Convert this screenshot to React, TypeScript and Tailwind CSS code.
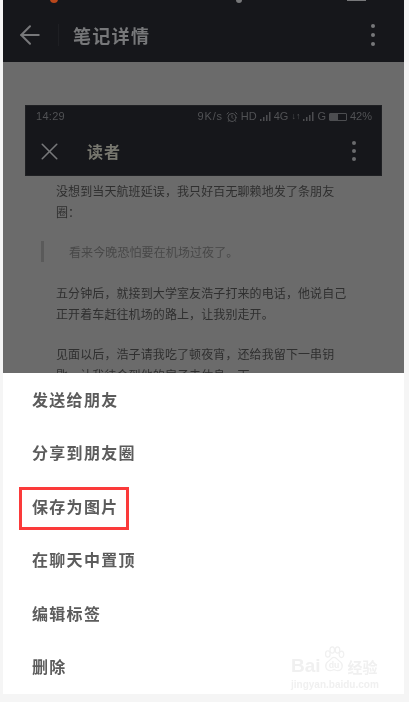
import { ArrowLeft, X, AlarmClock } from "lucide-react";

const CJK = "font-['Noto_Sans_CJK_SC','Noto_Sans',sans-serif]";

const menuItems = ["发送给朋友", "分享到朋友圈", "保存为图片", "在聊天中置顶", "编辑标签", "删除"];

function Kebab({ className }: { className: string }) {
  return (
    <div className={`flex flex-col items-center ${className}`}>
      <span className="w-[4px] h-[4px] rounded-full bg-current" />
      <span className="w-[4px] h-[4px] rounded-full bg-current" />
      <span className="w-[4px] h-[4px] rounded-full bg-current" />
    </div>
  );
}

function Signal() {
  return (
    <svg width="11" height="9" viewBox="0 0 11 9" fill="#4c4d50">
      <rect x="0" y="7" width="1.5" height="2" />
      <rect x="3" y="5" width="1.5" height="4" />
      <rect x="6" y="3" width="1.5" height="6" />
      <rect x="9" y="0" width="1.5" height="9" />
    </svg>
  );
}

function StatusRow() {
  return (
    <div className="h-[21px] flex items-center pl-[10px] pr-[9px] text-[11px] leading-none text-[#515255] font-['Liberation_Sans',sans-serif] blur-[0.4px]">
      <span className="tracking-[0.3px]">14:29</span>
      <div className="ml-auto flex items-center gap-[3px]">
        <span className="tracking-[0.8px]">9K/s</span>
        <AlarmClock className="w-[12px] h-[12px]" strokeWidth={2} />
        <span>HD</span>
        <Signal />
        <span>4G</span>
        <span className="text-[9px]">↓↑</span>
        <Signal />
        <span>G</span>
        <div className="w-[18px] h-[8px] border border-[#4c4d50] rounded-[1px]">
          <div className="w-[8px] h-full bg-[#4c4d50]" />
        </div>
        <span>42%</span>
      </div>
    </div>
  );
}

function ArticleCard() {
  return (
    <div className="mt-[43px] mx-[22px] h-[71px] bg-[#16171b] flex flex-col border border-[#1f2023]">
      <StatusRow />
      <div className="flex-1 flex items-center pl-[9px] pr-[25px] text-[#77787a]">
        <X className="w-[29px] h-[29px]" strokeWidth={1.3} />
        <span className={`${CJK} ml-[23px] text-[16px] leading-none font-bold tracking-[1px] text-[#77776f] blur-[0.3px]`}>读者</span>
        <Kebab className="ml-auto gap-[4px] text-[#6a6b6d]" />
      </div>
    </div>
  );
}

function Article() {
  return (
    <div className={`${CJK} pl-[53px] pr-[57px] text-[12px] leading-[21px] tracking-[0.1px] text-[#2f2f2f] blur-[0.4px]`}>
      <p className="mt-[4px]">没想到当天航班延误，我只好百无聊赖地发了条朋友圈：</p>
      <div className="mt-[19px] -ml-[15px] pl-[25px] border-l-[3px] border-[#5a5a5a] text-[#484848] h-[21px] whitespace-nowrap">
        看来今晚恐怕要在机场过夜了。
      </div>
      <p className="mt-[20px]">五分钟后，就接到大学室友浩子打来的电话，他说自己正开着车赶往机场的路上，让我别走开。</p>
      <p className="mt-[19px]">见面以后，浩子请我吃了顿夜宵，还给我留下一串钥匙，让我待会到他的房子去休息一下。</p>
    </div>
  );
}

function Watermark() {
  return (
    <div className="absolute right-[24px] bottom-[3px] w-[89px] text-[#f0f0f0] select-none blur-[0.4px]">
      <div className="flex items-end whitespace-nowrap">
        <span className="font-['Liberation_Sans',sans-serif] font-bold text-[19px] leading-none">Bai</span>
        <svg width="24" height="29" viewBox="0 0 24 33" fill="none" stroke="currentColor" strokeWidth="1.4" className="ml-[1px] shrink-0">
          <ellipse cx="5" cy="9" rx="2.6" ry="3.6" />
          <ellipse cx="10" cy="4.5" rx="2.6" ry="3.6" />
          <ellipse cx="16" cy="4.5" rx="2.6" ry="3.6" />
          <ellipse cx="20.5" cy="9.5" rx="2.6" ry="3.6" />
          <path d="M12 13c-3 0-4 3-7 5-4 3-3 10 3 10 2 0 3-1 4-1s2 1 4 1c6 0 7-7 3-10-3-2-4-5-7-5z" />
          <text x="12" y="25" textAnchor="middle" fontSize="10" fontWeight="700" fontFamily="Liberation Sans" fill="currentColor" stroke="none">du</text>
        </svg>
        <span className={`${CJK} font-bold text-[15px] leading-none ml-[2px] mb-[1px] shrink-0`}>经验</span>
      </div>
      <div className="mt-[4px] font-['Liberation_Sans',sans-serif] font-bold text-[10px] leading-[12px] whitespace-nowrap">jingyan.baidu.com</div>
    </div>
  );
}

export default function App() {
  return (
    <div className="w-[409px] h-[702px] bg-[#f5f5f5] pl-[3px] pr-[5px] pb-[8px] overflow-hidden">
      <div className="relative h-full bg-white flex flex-col overflow-hidden">
        <header className="relative h-[62px] pt-[7px] bg-[#16171b] flex items-center shrink-0 text-[#77787a]">
          <div className="absolute top-0 left-0 right-0 h-[3px] overflow-hidden">
            <span className="absolute left-[47px] -top-[5px] w-[8px] h-[8px] rounded-full bg-[#b9471b]" />
            <span className="absolute left-[233px] -top-[3px] w-[6px] h-[6px] rounded-full bg-[#77787a]" />
            <span className="absolute left-[344px] top-0 w-[19px] h-[1px] bg-[#77787a]" />
          </div>
          <ArrowLeft className="ml-[12px] w-[30px] h-[30px]" strokeWidth={1.6} />
          <span className="ml-[13px] w-px h-[22px] bg-[#1e1f23]" />
          <span className={`${CJK} ml-[14px] text-[18px] leading-none font-bold tracking-[1.3px] blur-[0.3px]`}>笔记详情</span>
          <Kebab className="ml-auto mr-[29px] gap-[5px]" />
        </header>

        <main className="h-[311px] bg-[#6b6b6b] overflow-hidden shrink-0">
          <ArticleCard />
          <Article />
        </main>

        <section className="flex-1 flex flex-col bg-white">
          {menuItems.map((item, i) => (
            <div key={item} className="relative flex-1 flex items-center pl-[29px] pb-[2px]">
              <span className={`${CJK} text-[16px] leading-none font-bold tracking-[1.3px] text-[#5c5c5c] blur-[0.3px]`}>{item}</span>
              {i === 2 && (
                <div className="absolute left-[16px] top-[7px] w-[110px] h-[43px] border-[3px] border-[#fb3a3a]" />
              )}
            </div>
          ))}
        </section>
        <Watermark />
      </div>
    </div>
  );
}
